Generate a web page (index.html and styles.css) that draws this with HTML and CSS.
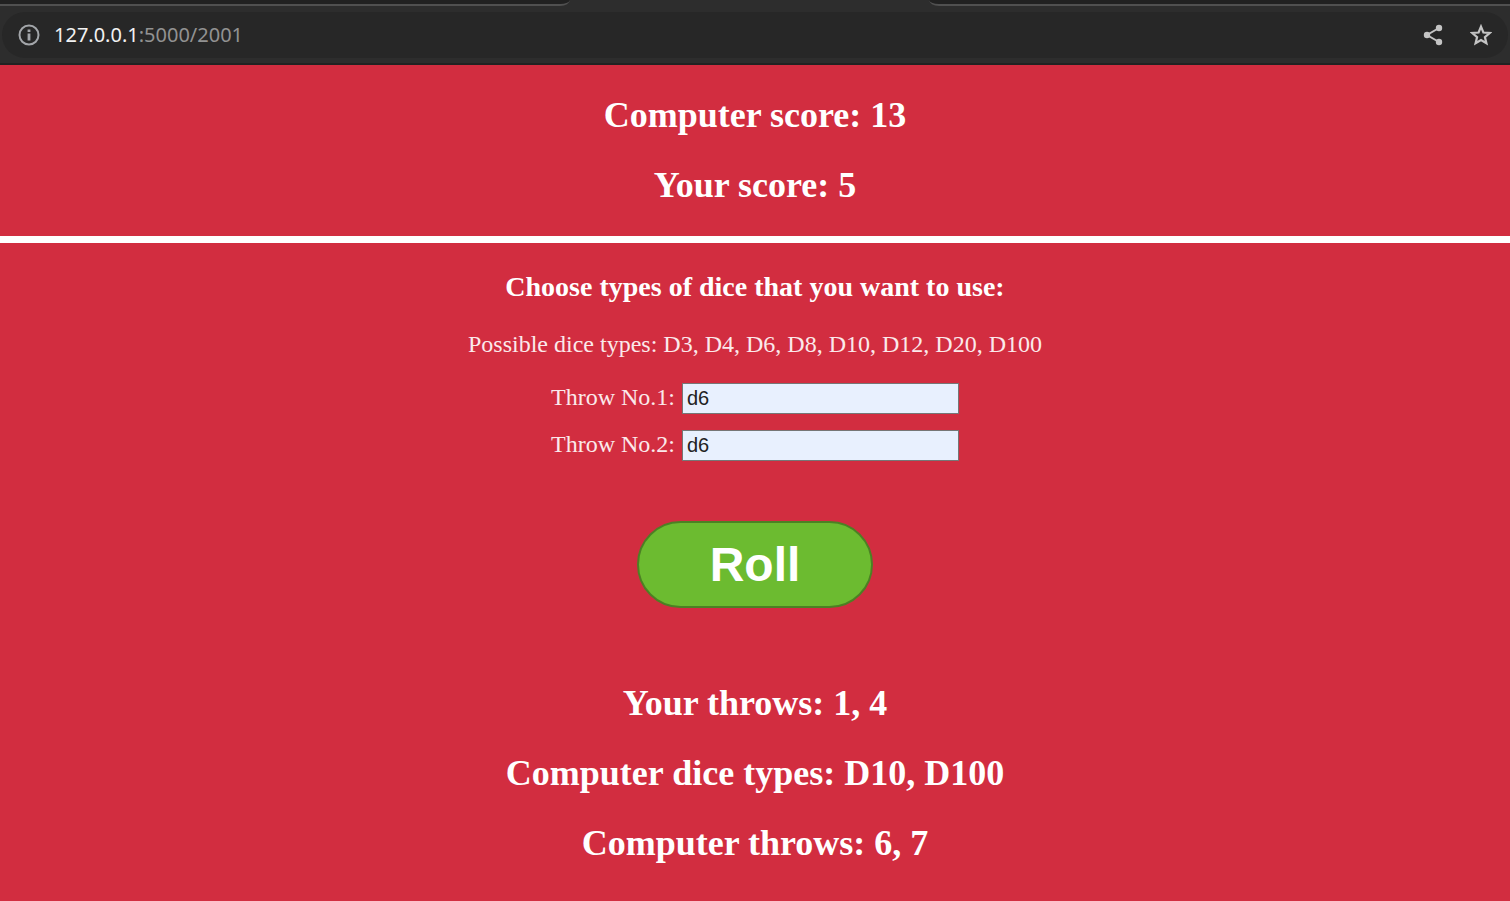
FILE: index.html
```html
<!DOCTYPE html>
<html lang="en">
<head>
<meta charset="utf-8">
<title>Dice game</title>
<link rel="stylesheet" href="styles.css">
</head>
<body>
<header class="browser">
  <div class="tabs">
    <div class="tab tab-left"></div>
    <div class="tab-active"></div>
    <div class="tab tab-right"></div>
  </div>
  <div class="address">
    <button class="icon" type="button" aria-label="Site information">
      <svg width="22" height="22" viewBox="0 0 22 22" fill="none" stroke="#a3a6aa" stroke-width="2"><circle cx="11" cy="11" r="9.5"/><path d="M11 9.500v7M11 5.500v2.500" stroke-width="2.800"/></svg>
    </button>
    <div class="url"><span class="host">127.0.0.1</span>:5000/2001</div>
    <button class="icon" type="button" aria-label="Share">
      <svg width="22" height="22" viewBox="0 0 22 22" fill="#c4c4c4"><path d="M17 4L5 11l12 7" fill="none" stroke="#c4c4c4" stroke-width="2"/><circle cx="17" cy="4" r="3.2"/><circle cx="5" cy="11" r="3.2"/><circle cx="17" cy="18" r="3.2"/></svg>
    </button>
    <button class="icon" type="button" aria-label="Bookmark">
      <svg width="22" height="22" viewBox="0 0 22 22" fill="none" stroke="#c4c4c4" stroke-width="2.200"><path d="M11 2.6l2.4 5.9 6.3.5-4.8 4.1 1.5 6.2-5.4-3.3-5.4 3.3 1.5-6.2L2.300 9l6.300-.5z"/></svg>
    </button>
  </div>
</header>
<section class="scores">
  <h2>Computer score: 13</h2>
  <h2>Your score: 5</h2>
</section>
<main class="game">
  <h3>Choose types of dice that you want to use:</h3>
  <p>Possible dice types: D3, D4, D6, D8, D10, D12, D20, D100</p>
  <form class="form">
    <div class="field">
      <label for="throw1">Throw No.1:</label>
      <input id="throw1" type="text" value="d6">
    </div>
    <div class="field">
      <label for="throw2">Throw No.2:</label>
      <input id="throw2" type="text" value="d6">
    </div>
    <button class="roll" type="button">Roll</button>
  </form>
  <div class="results">
    <h2>Your throws: 1, 4</h2>
    <h2>Computer dice types: D10, D100</h2>
    <h2>Computer throws: 6, 7</h2>
  </div>
</main>
</body>
</html>
```
FILE: styles.css
```css
* { box-sizing: border-box; }

body {
  margin: 0;
  min-height: 100vh;
  background: #d22d40;
  color: #fff;
  font-family: "Liberation Serif", "Times New Roman", serif;
  font-size: 24px;
  text-align: center;
}

h2, h3, p { margin: 0; }

h2 { font-size: 36px; line-height: 40px; }
h3 { font-size: 28px; line-height: 32px; }
p { line-height: 28px; color: #fbe9eb; }

.browser {
  background: #2d2d2d;
  border-bottom: 2px solid #222;
}

.tabs { display: flex; height: 7px; }
.tab {
  height: 6px;
  background: #212121;
  border-bottom: 2px solid #505050;
}
.tab-left { flex: 570; border-bottom-right-radius: 10px 6px; }
.tab-active { flex: 359; }
.tab-right { flex: 581; border-bottom-left-radius: 10px 6px; }

.address {
  display: flex;
  align-items: center;
  height: 46px;
  margin: 5px 2px;
  padding: 0 16px;
  gap: 26px;
  border-radius: 23px;
  background: #272727;
}

.icon {
  display: flex;
  padding: 0;
  border: 0;
  background: none;
}

.url {
  flex: 1;
  margin-left: -12px;
  color: #929292;
  font: 20px/28px "Noto Sans", sans-serif;
  text-align: left;
}
.host { color: #f2f2f2; }

.scores {
  display: flex;
  flex-direction: column;
  gap: 30px;
  padding: 30px 0 31px;
  border-bottom: 7px solid #fff;
}

.game { padding: 28px 0; }
.game p { margin-top: 27px; }

.form {
  display: flex;
  flex-direction: column;
  align-items: center;
  gap: 16px;
  margin-top: 25px;
}
.field {
  display: flex;
  align-items: flex-start;
  gap: 7px;
}
.field label { line-height: 28px; color: #fbe9eb; }
.field input {
  width: 277px;
  height: 31px;
  padding: 0 4px;
  border: 1px solid #767676;
  background: #e8f0fe;
  color: #222;
  font: 20px "Liberation Sans", Arial, sans-serif;
}

.roll {
  margin-top: 44px;
  padding: 15px 71px;
  border: 2px solid #4c8024;
  border-radius: 44px;
  background: #6cbb30;
  color: #fff;
  font: bold 48px/53px "Liberation Sans", Arial, sans-serif;
}

.results {
  display: flex;
  flex-direction: column;
  gap: 30px;
  margin-top: 75px;
}
```
